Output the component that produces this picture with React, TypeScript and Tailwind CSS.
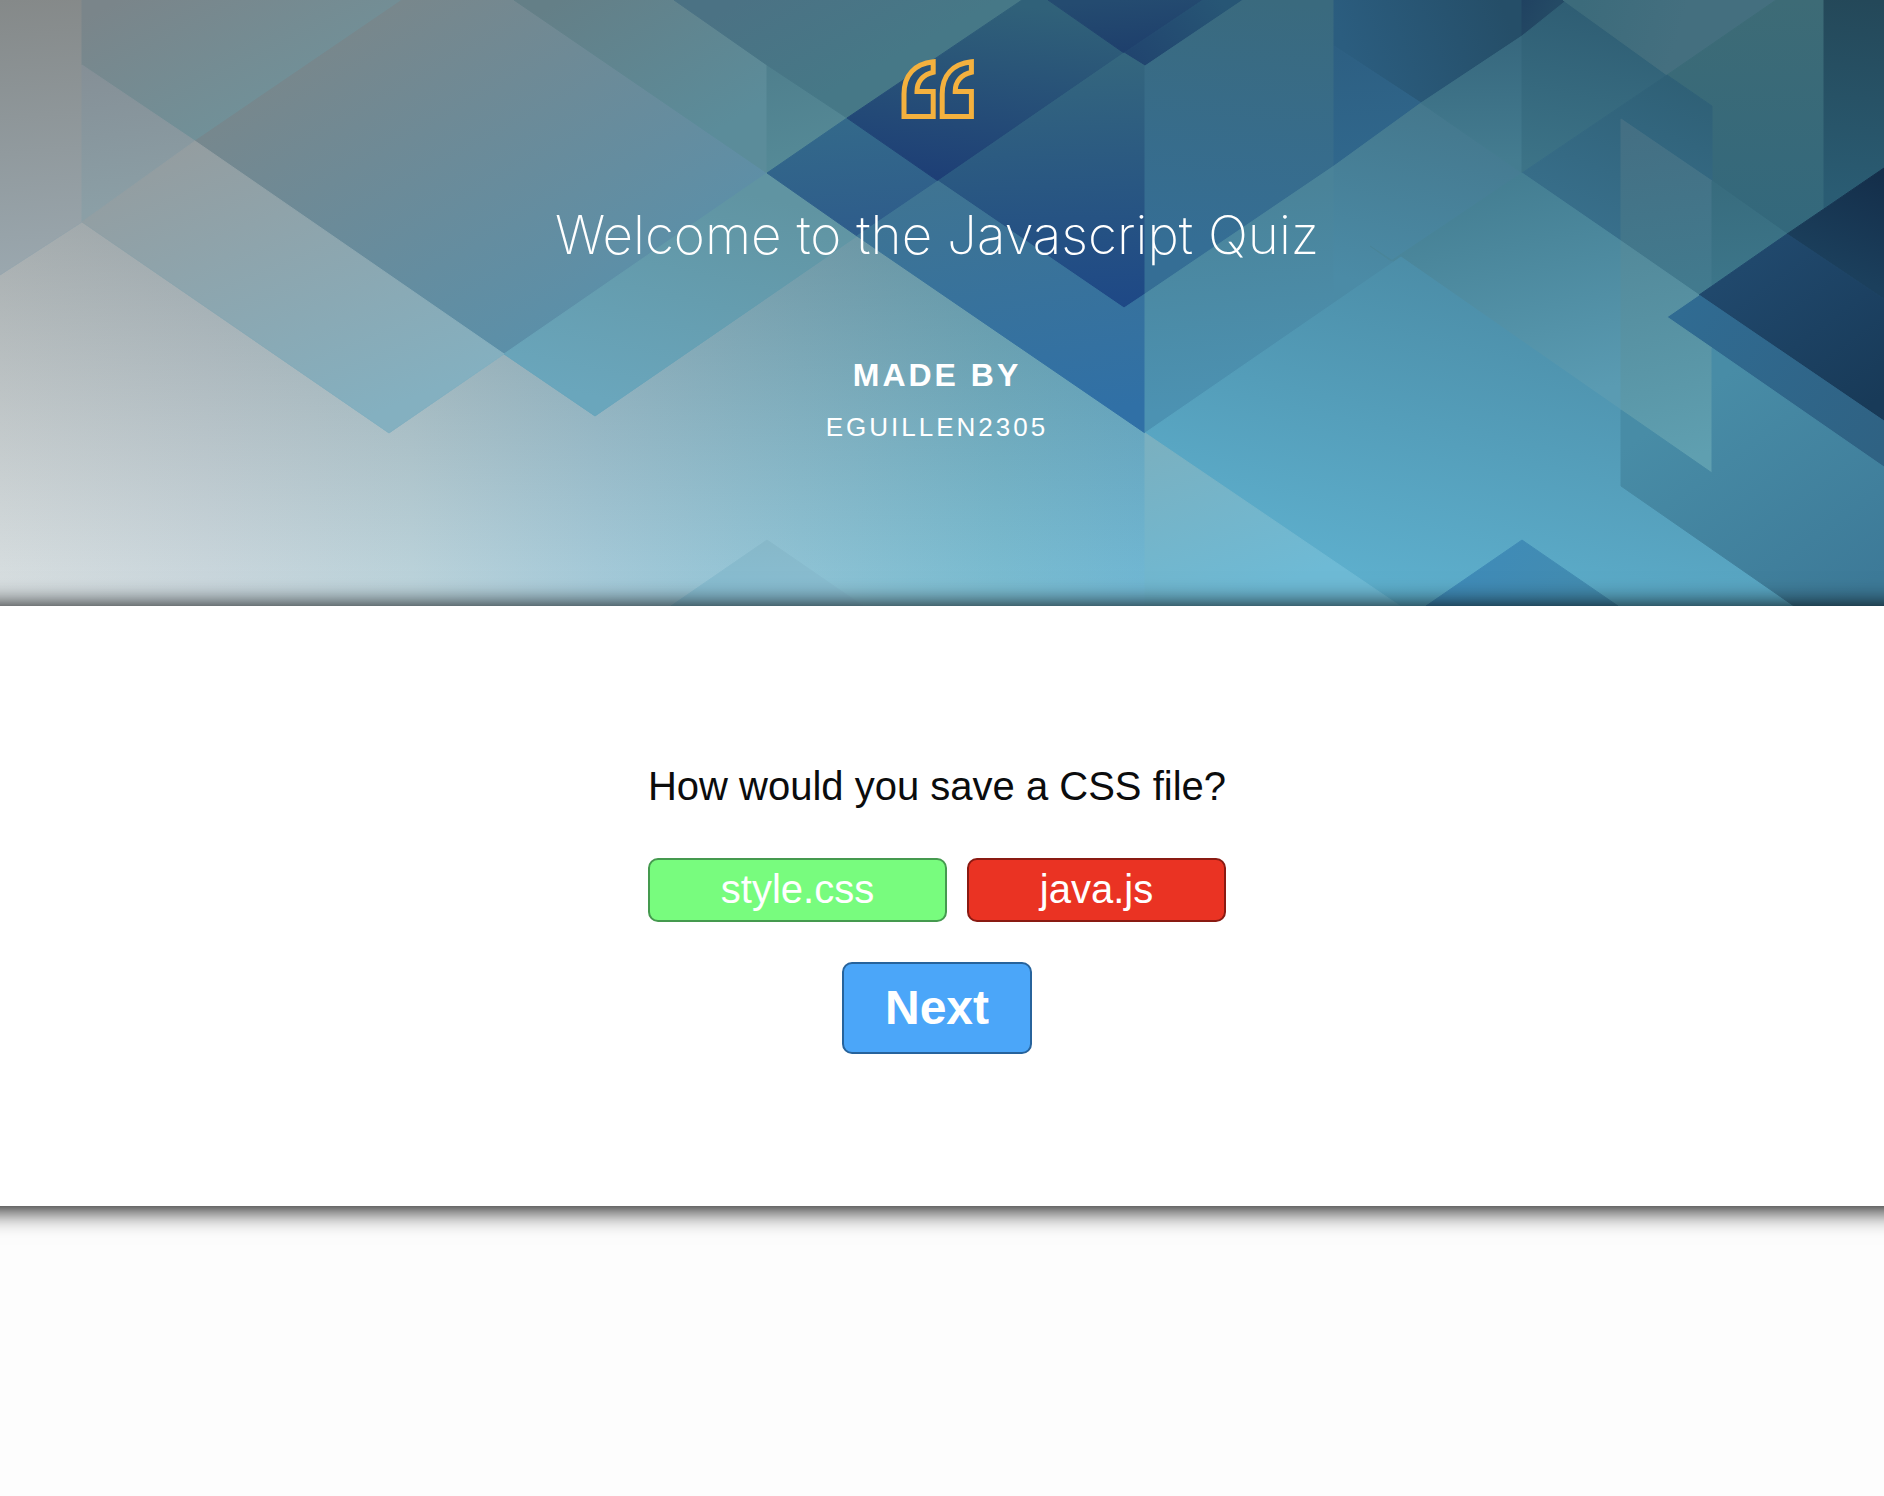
import React from "react";

type Facet = {
  points: string;
  from: [number, number, string];
  to: [number, number, string];
};

const facets: Facet[] = [
  { points: "0,0 82,0 82,222 0,275", from: [0, 0, "#858989"], to: [20, 270, "#9aa7ae"] },
  { points: "82,0 402,0 195,141 82,65", from: [120, 0, "#7a858a"], to: [190, 141, "#719098"] },
  { points: "82,65 195,141 82,222", from: [82, 65, "#858f96"], to: [100, 210, "#8b9fa6"] },
  { points: "195,141 402,0 514,0 767,173 504,354", from: [370, 20, "#78878c"], to: [550, 350, "#5a90aa"] },
  { points: "514,0 674,0 767,65 767,173", from: [560, 0, "#647f87"], to: [660, 165, "#5b8c9a"] },
  { points: "767,65 847,118 767,173", from: [767, 65, "#4f7f8d"], to: [790, 170, "#558a97"] },
  { points: "674,0 1022,0 847,118 767,65", from: [740, 0, "#4b7284"], to: [800, 110, "#467887"] },
  { points: "195,141 504,354 389,433 82,222", from: [190, 141, "#949da0"], to: [310, 440, "#84b0c0"] },
  { points: "504,354 767,173 857,236 595,416", from: [730, 190, "#6094a2"], to: [680, 416, "#6aa6bc"] },
  { points: "767,173 847,118 938,181 857,236", from: [850, 118, "#33698a"], to: [860, 236, "#2e5c8b"] },
  { points: "847,118 1022,0 1048,0 1124,53 938,181", from: [980, 0, "#306179"], to: [955, 185, "#1d3e76"] },
  { points: "1048,0 1203,0 1124,53", from: [1120, 0, "#244b70"], to: [1124, 53, "#1e3f6c"] },
  { points: "1203,0 1243,0 1145,66 1124,53", from: [1220, 0, "#275675"], to: [1140, 66, "#21456f"] },
  { points: "938,181 1124,53 1145,66 1145,294 1124,308", from: [1100, 60, "#34667e"], to: [1110, 308, "#1e4886"] },
  { points: "938,181 1124,308 1145,294 1145,433 857,236", from: [940, 181, "#3f7492"], to: [980, 430, "#3070a6"] },
  { points: "1145,66 1243,0 1334,0 1334,166 1145,294", from: [1260, 0, "#3a6a7e"], to: [1240, 250, "#356e95"] },
  { points: "1334,0 1522,0 1522,36 1421,103 1334,46", from: [1350, 60, "#2b5d7f"], to: [1500, 0, "#254e68"] },
  { points: "1334,46 1421,103 1334,166", from: [1334, 46, "#2d5f82"], to: [1340, 160, "#30678c"] },
  { points: "1522,0 1571,0 1522,36", from: [1522, 0, "#204261"], to: [1550, 16, "#244a65"] },
  { points: "1145,294 1334,166 1334,303 1145,433", from: [1260, 190, "#4a8399"], to: [1280, 400, "#4c92b2"] },
  { points: "1334,166 1421,103 1522,173 1334,303", from: [1440, 103, "#44778c"], to: [1400, 290, "#4b8ba6"] },
  { points: "1421,103 1522,36 1522,173", from: [1490, 40, "#37687e"], to: [1490, 160, "#447c90"] },
  { points: "1522,36 1567,0 1667,75 1522,173", from: [1580, 10, "#2f5e74"], to: [1550, 170, "#3c7387"] },
  { points: "1563,0 1776,0 1667,75", from: [1580, 0, "#3c6b7b"], to: [1680, 30, "#446f7f"] },
  { points: "1776,0 1824,0 1824,208 1787,234 1712,181 1712,106 1667,75", from: [1780, 0, "#3d6b76"], to: [1780, 234, "#33687c"] },
  { points: "1824,0 1884,0 1884,168 1824,208", from: [1860, 0, "#244859"], to: [1840, 195, "#2a5c73"] },
  { points: "1522,173 1667,75 1712,106 1712,181 1621,119 1621,241", from: [1690, 85, "#2f6076"], to: [1630, 240, "#386f8b"] },
  { points: "1621,119 1712,181 1712,285 1699,295 1621,241", from: [1640, 125, "#446f83"], to: [1660, 290, "#427a8e"] },
  { points: "1712,181 1787,234 1712,285", from: [1715, 185, "#386c7e"], to: [1720, 280, "#3c7589"] },
  { points: "1787,234 1884,168 1884,299", from: [1884, 175, "#142e4a"], to: [1840, 270, "#1b3f5c"] },
  { points: "1699,295 1787,234 1884,299 1884,421", from: [1740, 270, "#20486c"], to: [1850, 420, "#183a58"] },
  { points: "1667,317 1699,295 1884,421 1884,467", from: [1680, 310, "#306b92"], to: [1884, 445, "#2f6283"] },
  { points: "1370,246 1391,261 1522,173 1621,241 1621,410", from: [1500, 180, "#447e92"], to: [1540, 400, "#5a9bb2"] },
  { points: "1621,241 1699,295 1667,317 1712,348 1712,473 1621,410", from: [1630, 250, "#538a9b"], to: [1670, 460, "#5f9fb0"] },
  { points: "1145,433 1401,257 1621,410 1621,486 1794,606 1400,606", from: [1470, 260, "#4b8ca6"], to: [1390, 600, "#5eb0ce"] },
  { points: "1145,433 1400,606 1145,606", from: [1160, 440, "#7ab0c0"], to: [1220, 606, "#6ebad5"] },
  { points: "1621,410 1712,473 1712,348 1884,467 1884,606 1794,606 1621,486", from: [1690, 400, "#488ca6"], to: [1840, 606, "#3d7a98"] },
  { points: "671,606 767,540 863,606", from: [767, 540, "#87b8c9"], to: [767, 606, "#89bfd4"] },
  { points: "1426,606 1522,540 1618,606", from: [1480, 540, "#3f8bb8"], to: [1580, 606, "#438cb0"] },
];

const dune = "0,275 82,222 389,433 504,354 595,416 857,236 1145,433 1145,606 0,606";

function Backdrop() {
  return (
    <svg
      className="absolute inset-0 h-full w-full bg-[#4c8ea8]"
      viewBox="0 0 1884 606"
      preserveAspectRatio="none"
      aria-hidden="true"
    >
      <defs>
        {facets.map((f, i) => (
          <linearGradient
            key={i}
            id={`facet-${i}`}
            gradientUnits="userSpaceOnUse"
            x1={f.from[0]}
            y1={f.from[1]}
            x2={f.to[0]}
            y2={f.to[1]}
          >
            <stop offset="0" stopColor={f.from[2]} />
            <stop offset="1" stopColor={f.to[2]} />
          </linearGradient>
        ))}
        <linearGradient id="dune" gradientUnits="userSpaceOnUse" x1="0" y1="0" x2="1145" y2="0">
          <stop offset="0" stopColor="#d8dfe1" />
          <stop offset=".18" stopColor="#cbd8de" />
          <stop offset=".36" stopColor="#bcd4dc" />
          <stop offset=".52" stopColor="#a6cbda" />
          <stop offset=".7" stopColor="#8fc4d6" />
          <stop offset=".87" stopColor="#7bbdd2" />
          <stop offset="1" stopColor="#71b8d4" />
        </linearGradient>
        <linearGradient id="shade" gradientUnits="userSpaceOnUse" x1="0" y1="222" x2="0" y2="590">
          <stop offset="0" stopColor="#1c2020" stopOpacity=".27" />
          <stop offset=".55" stopColor="#1c2020" stopOpacity=".12" />
          <stop offset="1" stopColor="#1c2020" stopOpacity="0" />
        </linearGradient>
      </defs>
      <polygon points={dune} fill="url(#dune)" />
      <polygon points={dune} fill="url(#shade)" />
      {facets.map((f, i) => (
        <polygon key={i} points={f.points} fill={`url(#facet-${i})`} stroke={`url(#facet-${i})`} strokeWidth="1" />
      ))}
    </svg>
  );
}

function QuoteMark() {
  return (
    <svg className="h-[60px] w-[73px]" viewBox="0 0 73 60" fill="none" stroke="#f4b13e" strokeWidth="5" aria-hidden="true">
      <path d="M3 57.5V35C3 16 13.700 5 32.200 2.800V13.200C22.700 15.500 16 22 16 32.500H32.200V57.500Z" />
      <path d="M41.200 57.500V35C41.200 16 51.900 5 70.400 2.800V13.200C60.900 15.500 54.200 22 54.200 32.500H70.400V57.500Z" />
    </svg>
  );
}

export default function App() {
  return (
    <div className="min-h-screen overflow-x-hidden bg-[#fdfdfd] font-['Liberation_Sans',Arial,sans-serif]">
      <header className="relative flex h-[606px] flex-col items-center overflow-hidden pt-[59px] pr-2.5 text-center text-white">
        <Backdrop />
        <div className="relative flex flex-col items-center">
          <QuoteMark />
          <h1 className="mt-20 font-['Inter',sans-serif] text-[53px] leading-[72px] font-extralight">
            Welcome to the Javascript Quiz
          </h1>
          <p className="mt-[84px] text-[32px] leading-10 font-bold tracking-[3px]">MADE BY</p>
          <p className="mt-3 text-[26px] leading-10 tracking-[3px]">EGUILLEN2305</p>
        </div>
      </header>
      <main className="relative -mx-10 flex h-[600px] flex-col items-center bg-white pt-[156px] pr-2.5 shadow-[0_2px_24px_1px_#000]">
        <div className="flex flex-col items-center">
          <h2 className="text-[40px] leading-[48px] text-[#0b0c0d]">How would you save a CSS file?</h2>
          <div className="mt-12 flex gap-5 self-stretch text-[40px] leading-[58px] text-white">
            <button className="grow rounded-[10px] border-2 border-[#459a4f] bg-[#78fc7e] pb-0.5">style.css</button>
            <button className="grow rounded-[10px] border-2 border-[#8a1a12] bg-[#ea3323] pb-0.5">java.js</button>
          </div>
          <button className="mt-10 rounded-[10px] border-2 border-[#27639c] bg-[#4ba6f9] px-[41px] text-[48px] leading-[88px] font-bold text-white">
            Next
          </button>
        </div>
      </main>
    </div>
  );
}
